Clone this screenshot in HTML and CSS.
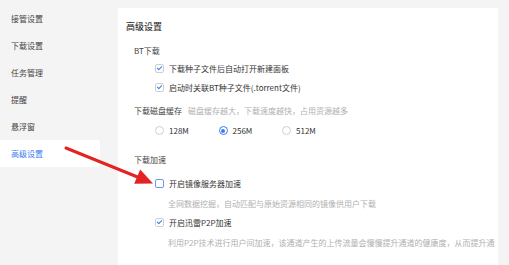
FILE: index.html
```html
<!DOCTYPE html>
<html lang="zh">
<head>
<meta charset="utf-8">
<link rel="stylesheet" href="styles.css">
</head>
<body>
<div class="app">
  <nav class="sidebar">
    <div class="nav-item">接管设置</div>
    <div class="nav-item">下载设置</div>
    <div class="nav-item">任务管理</div>
    <div class="nav-item">提醒</div>
    <div class="nav-item">悬浮窗</div>
    <div class="nav-item active">高级设置</div>
  </nav>
  <main class="panel">
    <div class="heading">高级设置</div>

    <div class="section bt">
      <div class="sec-title">BT下载</div>
      <div class="opts">
        <div class="row"><span class="cb checked"></span><span>下载种子文件后自动打开新建面板</span></div>
        <div class="row"><span class="cb checked"></span><span>启动时关联BT种子文件(.torrent文件)</span></div>
      </div>
    </div>

    <div class="section cache">
      <div class="sec-title">下载磁盘缓存<span class="inline-hint">磁盘缓存越大，下载速度越快，占用资源越多</span></div>
      <div class="radios">
        <div class="radio-item"><span class="rd"></span><span>128M</span></div>
        <div class="radio-item"><span class="rd on"></span><span>256M</span></div>
        <div class="radio-item"><span class="rd"></span><span>512M</span></div>
      </div>
    </div>

    <div class="section accel">
      <div class="sec-title">下载加速</div>
      <div class="opts">
        <div class="row first"><span class="cb focus"></span><span>开启镜像服务器加速</span></div>
        <div class="hint">全网数据挖掘，自动匹配与原始资源相同的镜像供用户下载</div>
        <div class="row second"><span class="cb checked"></span><span>开启迅雷P2P加速</span></div>
        <div class="hint">利用P2P技术进行用户间加速，该通道产生的上传流量会慢慢提升通道的健康度，从而提升通</div>
      </div>
    </div>
  </main>
</div>
<svg class="arrow" width="509" height="265" viewBox="0 0 509 265">
  <line x1="66" y1="148" x2="140" y2="178" stroke="#e32424" stroke-width="3" stroke-linecap="round"/>
  <polygon points="153,183.5 134.2,183.8 140.2,169.6" fill="#e32424"/>
</svg>
</body>
</html>
```

FILE: styles.css
```css
html, body {
  margin: 0;
  padding: 0;
  background: #f4f4f4;
}
body {
  width: 509px;
  height: 265px;
  overflow: hidden;
  font-family: "Noto Sans CJK SC", "Noto Sans", sans-serif;
  color: #333;
  font-size: 8px;
  position: relative;
}
.app {
  display: flex;
  height: 265px;
}
.sidebar {
  width: 100px;
  padding-top: 5px;
  flex: none;
}
.nav-item {
  height: 27px;
  line-height: 27px;
  padding-left: 11px;
  font-size: 8px;
  color: #444;
}
.nav-item.active {
  background: #fff;
  color: #3d7cf0;
  border-radius: 0 3px 3px 0;
}
.panel {
  margin-left: 18px;
  margin-top: 8px;
  width: 380px;
  background: #fff;
  padding: 12px 0 0 8px;
  box-sizing: border-box;
  overflow: hidden;
  white-space: nowrap;
}
.heading {
  font-size: 9px;
  line-height: 14px;
  font-weight: 500;
  color: #333;
}
.section {
  padding-left: 8px;
}
.section.bt { margin-top: 9px; }
.section.cache { margin-top: 6px; }
.section.accel { margin-top: 12px; }
.sec-title {
  height: 16px;
  line-height: 16px;
  color: #444;
}
.inline-hint {
  color: #b0b0b0;
  margin-left: 6px;
}
.opts {
  padding-left: 21px;
}
.row {
  height: 19px;
  display: flex;
  align-items: center;
  gap: 5px;
  color: #333;
}
.row.first { margin-top: 6px; }
.row.second { margin-top: 2px; }
.hint {
  margin-top: 4px;
  padding-left: 13px;
  height: 14px;
  line-height: 14px;
  color: #b0b0b0;
}
.cb {
  width: 9px;
  height: 9px;
  box-sizing: border-box;
  border: 1px solid #cfcfcf;
  border-radius: 2px;
  position: relative;
  flex: none;
  background: #fff;
}
.cb.checked::after {
  content: "";
  position: absolute;
  left: 2px;
  top: 0px;
  width: 2px;
  height: 4px;
  border: solid #3d7cf0;
  border-width: 0 1.4px 1.4px 0;
  transform: rotate(45deg);
}
.cb.focus {
  border-color: #6b98ef;
}
.radios {
  display: flex;
  margin-top: 2px;
  padding-left: 21px;
}
.radio-item {
  width: 63.5px;
  height: 19px;
  display: flex;
  align-items: center;
  gap: 5px;
  flex: none;
}
.rd {
  width: 9px;
  height: 9px;
  box-sizing: border-box;
  border: 1px solid #cfcfcf;
  border-radius: 50%;
  flex: none;
  position: relative;
}
.rd.on {
  border-color: #3d7cf0;
}
.rd.on::after {
  content: "";
  position: absolute;
  left: 1.5px;
  top: 1.5px;
  width: 4px;
  height: 4px;
  border-radius: 50%;
  background: #3d7cf0;
}
.arrow {
  position: absolute;
  left: 0;
  top: 0;
  pointer-events: none;
}
```
